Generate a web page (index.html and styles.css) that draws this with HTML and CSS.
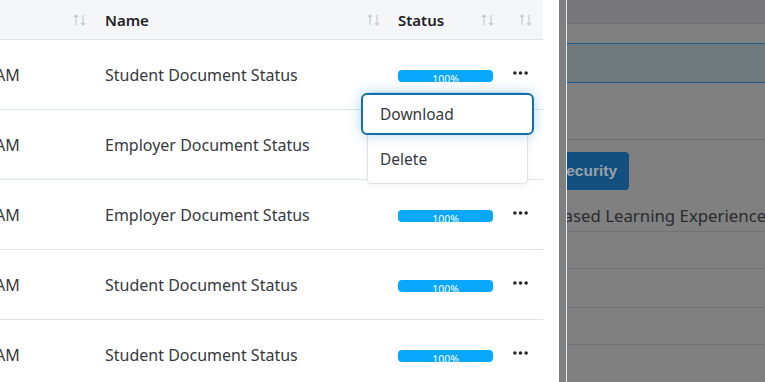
FILE: index.html
```html
<!DOCTYPE html>
<html lang="en">
<head>
    <meta charset="UTF-8">
    <title>Documents</title>
    <link rel="stylesheet" href="styles.css">
</head>
<body>
    <div class="screen">
        <!-- documents table -->
        <div class="table-panel">
            <div class="table">
                <div class="row head">
                    <div class="cell c-date">Uploaded <svg class="sort" viewBox="0 0 14 14"><path d="M3 12V2M1 4l2-2 2 2M10 2v10M8 10l2 2 2-2"/></svg></div>
                    <div class="cell c-name">Name <svg class="sort" viewBox="0 0 14 14"><path d="M3 12V2M1 4l2-2 2 2M10 2v10M8 10l2 2 2-2"/></svg></div>
                    <div class="cell c-status">Status <svg class="sort" viewBox="0 0 14 14"><path d="M3 12V2M1 4l2-2 2 2M10 2v10M8 10l2 2 2-2"/></svg></div>
                    <div class="cell c-act"><svg class="sort" viewBox="0 0 14 14"><path d="M3 12V2M1 4l2-2 2 2M10 2v10M8 10l2 2 2-2"/></svg></div>
                </div>

                <div class="row">
                    <div class="cell c-date">10:24 AM</div>
                    <div class="cell c-name">Student Document Status</div>
                    <div class="cell c-status"><div class="progress">100%</div></div>
                    <div class="cell c-act">
                        <svg class="dots" viewBox="0 0 16 4"><circle cx="2" cy="2" r="1.9"/><circle cx="8" cy="2" r="1.9"/><circle cx="14" cy="2" r="1.9"/></svg>
                        <div class="menu">
                            <div class="menu-item active">Download</div>
                            <div class="menu-item">Delete</div>
                        </div>
                    </div>
                </div>
                <div class="row">
                    <div class="cell c-date">10:24 AM</div>
                    <div class="cell c-name">Employer Document Status</div>
                    <div class="cell c-status"><div class="progress">100%</div></div>
                    <div class="cell c-act"><svg class="dots" viewBox="0 0 16 4"><circle cx="2" cy="2" r="1.9"/><circle cx="8" cy="2" r="1.9"/><circle cx="14" cy="2" r="1.9"/></svg></div>
                </div>
                <div class="row">
                    <div class="cell c-date">10:24 AM</div>
                    <div class="cell c-name">Employer Document Status</div>
                    <div class="cell c-status"><div class="progress">100%</div></div>
                    <div class="cell c-act"><svg class="dots" viewBox="0 0 16 4"><circle cx="2" cy="2" r="1.9"/><circle cx="8" cy="2" r="1.9"/><circle cx="14" cy="2" r="1.9"/></svg></div>
                </div>
                <div class="row">
                    <div class="cell c-date">10:24 AM</div>
                    <div class="cell c-name">Student Document Status</div>
                    <div class="cell c-status"><div class="progress">100%</div></div>
                    <div class="cell c-act"><svg class="dots" viewBox="0 0 16 4"><circle cx="2" cy="2" r="1.9"/><circle cx="8" cy="2" r="1.9"/><circle cx="14" cy="2" r="1.9"/></svg></div>
                </div>
                <div class="row">
                    <div class="cell c-date">10:24 AM</div>
                    <div class="cell c-name">Student Document Status</div>
                    <div class="cell c-status"><div class="progress">100%</div></div>
                    <div class="cell c-act"><svg class="dots" viewBox="0 0 16 4"><circle cx="2" cy="2" r="1.9"/><circle cx="8" cy="2" r="1.9"/><circle cx="14" cy="2" r="1.9"/></svg></div>
                </div>
            </div>
        </div>

        <div class="spacer"></div>

        <!-- page behind the overlay -->
        <div class="backdrop">
            <div class="backdrop-edge"></div>
            <div class="backdrop-page">
                <div class="bd-top"></div>
                <div class="bd-input"></div>
                <div class="bd-rule"></div>
                <div class="bd-btn">Security</div>
                <div class="bd-title">Work Based Learning Experience</div>
                <div class="bd-line l1"></div>
                <div class="bd-line l2"></div>
                <div class="bd-line l3"></div>
                <div class="bd-line l4"></div>
            </div>
        </div>
    </div>
</body>
</html>
```

FILE: styles.css
```css
body {
    margin: 0;
    font-family: 'Noto Sans', sans-serif;
    background: #fff;
    overflow: hidden;
}
.screen {
    display: flex;
    width: 765px;
    height: 382px;
    overflow: hidden;
}

/* table */
.table-panel {
    width: 543px;
    flex: none;
    overflow: hidden;
}
.table {
    margin-left: -60px;
}
.row {
    display: grid;
    grid-template-columns: 155px 293px 117px 38px;
    height: 70px;
    border-bottom: 1px solid #dfe4e8;
    box-sizing: border-box;
    align-items: center;
}
.row.head {
    height: 40px;
    background: #f5f6f8;
    font-weight: 600;
}
.cell {
    display: flex;
    align-items: center;
    justify-content: space-between;
    padding-left: 10px;
    font-size: 16px;
    color: #36393e;
    white-space: nowrap;
    height: 100%;
}
.head .cell {
    color: #1f2228;
    font-size: 15px;
}
.c-date {
    padding-right: 8px;
}
.head .c-date {
    color: transparent;
}
.c-name {
    padding-right: 7px;
}
.c-status {
    padding-right: 10px;
}
.c-act {
    padding: 0 15px 0 0;
    position: relative;
    justify-content: flex-end;
}
.head .c-act {
    padding-right: 10px;
}
.sort {
    width: 14px;
    height: 14px;
    fill: none;
    stroke: #c6cbd1;
    stroke-width: 1.2;
    flex: none;
}
.progress {
    width: 95px;
    height: 12px;
    border-radius: 4px;
    background: #0aa8fc;
    color: #fff;
    font-size: 10.5px;
    line-height: 12px;
    padding-top: 3px;
    box-sizing: border-box;
    text-align: center;
    overflow: hidden;
    margin-top: 2px;
}
.dots {
    width: 15px;
    height: 4px;
    fill: #24262b;
    margin-top: -4px;
}

/* dropdown */
.menu {
    position: absolute;
    top: 52px;
    right: 15px;
    width: 159px;
    background: #fff;
    border: 1px solid #dde2e6;
    border-radius: 4px;
    box-shadow: 0 2px 6px rgba(0, 0, 0, 0.06);
    z-index: 2;
}
.menu-item {
    height: 48px;
    display: flex;
    align-items: center;
    padding-left: 12px;
    font-size: 15.5px;
    color: #36393e;
}
.menu-item.active {
    height: 42px;
    margin: 0 -7px;
    padding-left: 17px;
    box-sizing: border-box;
    border: 2.5px solid #156fab;
    border-radius: 6px;
    background: #fff;
    box-shadow: 0 0 14px rgba(40, 140, 210, 0.35);
}

.spacer {
    width: 16px;
    flex: none;
}

/* greyed page on the right */
.backdrop {
    flex: 1;
    display: flex;
    background: #808080;
}
.backdrop-edge {
    width: 7px;
    border-right: 1.5px solid #e2e8ec;
    flex: none;
}
.backdrop-page {
    flex: 1;
    overflow: hidden;
}
.bd-top {
    height: 23px;
    background: #77777a;
    border-bottom: 1px solid #6f6f72;
}
.bd-input {
    margin-top: 19px;
    height: 38px;
    background: #6f787b;
    border-top: 1.5px solid #1b5d8e;
    border-bottom: 1.5px solid #1b5d8e;
}
.bd-rule {
    margin-top: 56px;
    height: 1px;
    background: #6c6c6c;
}
.bd-btn {
    margin: 12px 0 0 -18px;
    width: 80px;
    height: 38px;
    box-sizing: border-box;
    background: #134f7f;
    border-radius: 4px;
    color: #99a2aa;
    font-family: 'Liberation Sans', sans-serif;
    font-weight: bold;
    font-size: 15.5px;
    line-height: 38px;
    text-align: right;
    padding-right: 12px;
}
.bd-title {
    margin: 14px 0 0 -60px;
    font-size: 16.8px;
    color: #2a2c2f;
    white-space: nowrap;
    height: 24px;
}
.bd-line {
    height: 1px;
    background: #6e757a;
}
.l1 { margin-top: 3px; }
.l2 { margin-top: 36px; }
.l3 { margin-top: 38px; }
.l4 { margin-top: 36px; }
```
